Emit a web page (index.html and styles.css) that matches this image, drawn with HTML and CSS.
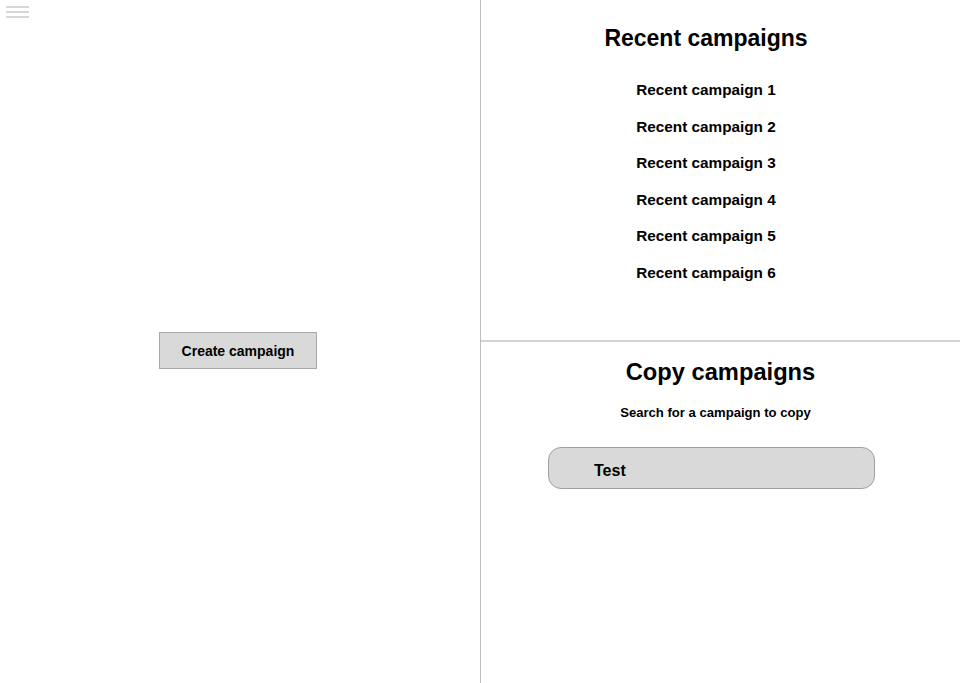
FILE: index.html
```html
<!DOCTYPE html>
<html>
<head>
<meta charset="utf-8">
<link rel="stylesheet" href="styles.css">
</head>
<body>
<div class="app">
  <div class="left">
    <div class="menu"><span></span><span></span><span></span></div>
    <div class="left-center">
      <button class="create">Create campaign</button>
    </div>
  </div>
  <div class="right">
    <section class="recent">
      <h1 class="title">Recent campaigns</h1>
      <ul class="list">
        <li>Recent campaign 1</li>
        <li>Recent campaign 2</li>
        <li>Recent campaign 3</li>
        <li>Recent campaign 4</li>
        <li>Recent campaign 5</li>
        <li>Recent campaign 6</li>
      </ul>
    </section>
    <section class="copy">
      <h1 class="title copy-title">Copy campaigns</h1>
      <p class="hint">Search for a campaign to copy</p>
      <div class="search">Test</div>
    </section>
  </div>
</div>
</body>
</html>
```
FILE: styles.css
```css
* { box-sizing: border-box; }
html, body { margin: 0; padding: 0; }
body {
  width: 960px;
  height: 683px;
  overflow: hidden;
  background: #fff;
  font-family: "Liberation Sans", Arial, sans-serif;
  color: #000;
}
.app { display: flex; height: 683px; }
.left {
  width: 481px;
  border-right: 1px solid #bdbdbd;
  display: flex;
  flex-direction: column;
}
.menu {
  padding: 6px 0 0 6px;
  display: flex;
  flex-direction: column;
  gap: 3px;
}
.menu span {
  display: block;
  width: 23px;
  height: 2px;
  background: #d6d6d6;
}
.left-center {
  padding-top: 314px;
  padding-left: 159px;
}
.create {
  width: 158px;
  height: 37px;
  background: #d9d9d9;
  border: 1px solid #a8a8a8;
  font-family: inherit;
  font-weight: bold;
  font-size: 14px;
  color: #000;
  padding: 0;
}
.right { flex: 1; display: flex; flex-direction: column; }
.recent {
  height: 342px;
  border-bottom: 2px solid #d4d4d4;
  padding-right: 29px;
  text-align: center;
}
.title {
  margin: 0;
  font-size: 23px;
  font-weight: bold;
  line-height: 28px;
  padding-top: 24px;
}
.list {
  list-style: none;
  margin: 0;
  padding: 28px 0 0;
}
.list li {
  font-size: 15.3px;
  font-weight: bold;
  line-height: 20px;
  margin-bottom: 16.6px;
}
.copy { text-align: center; }
.copy-title { font-size: 23.7px; padding-top: 16px; }
.hint {
  margin: 19px 0 0;
  padding-right: 10px;
  font-size: 13.1px;
  font-weight: bold;
  line-height: 16px;
}
.search {
  margin: 26px 0 0 67px;
  width: 327px;
  height: 42px;
  border: 1px solid #a0a0a0;
  border-radius: 13px;
  background: #d9d9d9;
  text-align: left;
  padding-left: 45px;
  font-size: 16px;
  font-weight: bold;
  line-height: 46px;
}
```
